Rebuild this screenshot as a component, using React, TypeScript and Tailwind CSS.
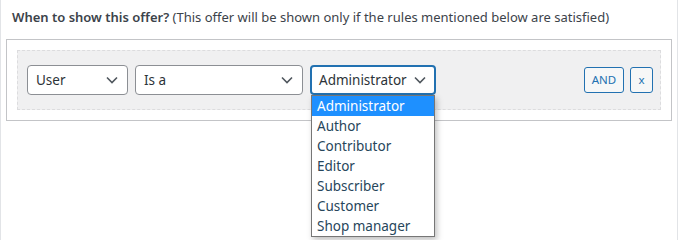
import React from 'react';

const roles = ['Administrator', 'Author', 'Contributor', 'Editor', 'Subscriber', 'Customer', 'Shop manager'];

const Chevron = () => (
  <svg width="12" height="8" viewBox="0 0 12 8" className="shrink-0" aria-hidden="true">
    <path d="M1 1.5 L6 6.5 L11 1.5" fill="none" stroke="#50575e" strokeWidth="1.6" />
  </svg>
);

interface FakeSelectProps {
  value: string;
  width: string;
  focused?: boolean;
}

const FakeSelect = ({ value, width, focused }: FakeSelectProps) => (
  <div
    className={`flex h-[30px] items-center justify-between rounded-[4px] bg-white text-[13.5px] text-[#2c3338] ${width} ${
      focused ? 'border-2 border-[#2271b1] pl-[7px] pr-[8px]' : 'border border-[#8c8f94] pl-2 pr-[9px]'
    }`}
  >
    <span>{value}</span>
    <Chevron />
  </div>
);

export default function App() {
  return (
    <div
      className="h-[240px] w-[678px] border-x border-[#e2e4e7] bg-white px-[5px]"
      style={{ fontFamily: '"Noto Sans", "Open Sans", sans-serif' }}
    >
      <div className="pl-[6px] pt-[8px] text-[13px] leading-[18px] text-[#3c434a]">
        <span className="font-semibold">When to show this offer?</span> (This offer will be shown only if the rules mentioned below are satisfied)
      </div>

      <div className="mt-[13px] w-[666px] border border-[#c3c4c7] p-[10px]">
        <div className="flex items-center border border-dashed border-[#dcdcde] bg-[#f0f0f1] pb-[14px] pl-[9px] pr-[7px] pt-[14px]">
          <FakeSelect value="User" width="w-[101px]" />
          <div className="ml-[7px]">
            <FakeSelect value="Is a" width="w-[168px]" />
          </div>
          <div className="relative ml-[7px]">
            <FakeSelect value="Administrator" width="w-[126px]" focused />
            {/* open options list */}
            <div className="absolute left-[1px] top-[30px] z-10 w-[124px] border border-[#767676] bg-white shadow-[2px_3px_6px_rgba(0,0,0,0.25)]">
              {roles.map((role, i) => (
                <div
                  key={role}
                  className={`h-[20px] pl-[5px] text-[13.5px] leading-[20px] ${
                    i === 0 ? 'bg-[#1e90ff] text-white' : 'text-[#27465b]'
                  }`}
                >
                  {role}
                </div>
              ))}
            </div>
          </div>
          <div className="ml-auto flex items-center gap-[6px]">
            <button className="h-[26px] w-[40px] rounded-[3px] border border-[#2271b1] bg-[#f6f7f7] text-[11.5px] text-[#2271b1]">
              AND
            </button>
            <button className="h-[26px] w-[23px] rounded-[3px] border border-[#2271b1] bg-[#f6f7f7] text-[11.5px] text-[#2271b1]">
              x
            </button>
          </div>
        </div>
      </div>
    </div>
  );
}
